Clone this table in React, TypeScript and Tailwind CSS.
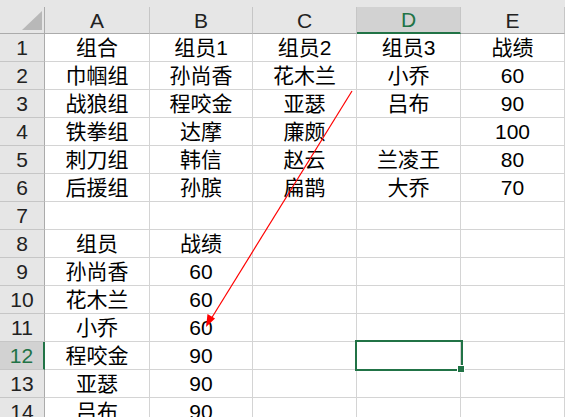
import React from "react";

const cols = ["A", "B", "C", "D", "E"];
const rows: string[][] = [
  ["组合", "组员1", "组员2", "组员3", "战绩"],
  ["巾帼组", "孙尚香", "花木兰", "小乔", "60"],
  ["战狼组", "程咬金", "亚瑟", "吕布", "90"],
  ["铁拳组", "达摩", "廉颇", "", "100"],
  ["刺刀组", "韩信", "赵云", "兰凌王", "80"],
  ["后援组", "孙膑", "扁鹊", "大乔", "70"],
  ["", "", "", "", ""],
  ["组员", "战绩", "", "", ""],
  ["孙尚香", "60", "", "", ""],
  ["花木兰", "60", "", "", ""],
  ["小乔", "60", "", "", ""],
  ["程咬金", "90", "", "", ""],
  ["亚瑟", "90", "", "", ""],
  ["吕布", "90", "", "", ""],
];

const font = { fontFamily: '"Liberation Sans", "Noto Sans CJK SC", sans-serif' };

export default function App() {
  return (
    <div
      className="relative w-[565px] h-[417px] overflow-hidden bg-white text-[21px] text-[#000]"
      style={font}
    >
      <div className="h-[7px] bg-[#e6e6e6]" />
      <div className="grid grid-cols-[45px_105px_103px_104px_104px_104px]">
        <div className="h-[27px] bg-[#e6e6e6] border-r border-b border-[#ababab] relative">
          <svg className="absolute left-[22px] top-[4px]" width="20" height="19" viewBox="0 0 20 19">
            <polygon points="20,0 20,19 0,19" fill="#b8b8b8" />
          </svg>
        </div>
        {cols.map((c) => {
          const sel = c === "D";
          return (
            <div
              key={c}
              className={
                sel
                  ? "h-[27px] flex items-center justify-center bg-[#d2d2d2] text-[#217346] border-r border-[#c6c6c6] border-b-2 border-b-[#217346] leading-none"
                  : "h-[27px] flex items-center justify-center bg-[#e6e6e6] text-[#222] border-r border-[#c6c6c6] border-b border-b-[#ababab] leading-none"
              }
            >
              {c}
            </div>
          );
        })}
        {rows.map((r, i) => {
          const sel = i === 11;
          return (
            <React.Fragment key={i}>
              <div
                className={
                  sel
                    ? "h-[28px] flex items-center justify-center bg-[#d2d2d2] text-[#217346] border-b border-[#c6c6c6] border-r-2 border-r-[#217346] leading-none"
                    : "h-[28px] flex items-center justify-center bg-[#e6e6e6] text-[#222] border-b border-[#c6c6c6] border-r border-r-[#ababab] leading-none"
                }
              >
                {i + 1}
              </div>
              {r.map((v, j) => (
                <div
                  key={j}
                  className="h-[28px] flex items-center justify-center border-r border-b border-[#d4d4d4] whitespace-nowrap leading-none"
                >
                  {v}
                </div>
              ))}
            </React.Fragment>
          );
        })}
      </div>

      <div className="absolute left-[355px] top-[340px] w-[108px] h-[31px] border-2 border-[#217346]" />
      <div className="absolute left-[458px] top-[366px] w-[6px] h-[6px] bg-[#217346] outline outline-1 outline-white" />

      <svg className="absolute left-0 top-0" width="565" height="417" viewBox="0 0 565 417">
        <line x1="352" y1="91" x2="211" y2="319" stroke="#ff0000" strokeWidth="1.2" />
        <polygon points="206,327 207.5,314 215,318.5" fill="#ff0000" />
      </svg>
    </div>
  );
}
